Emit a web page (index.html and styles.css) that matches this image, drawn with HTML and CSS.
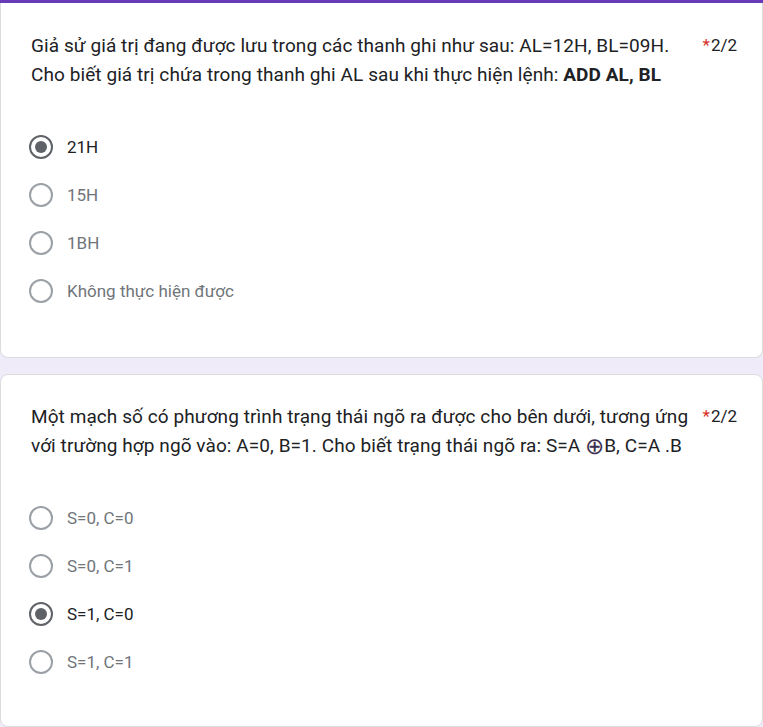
FILE: index.html
```html
<!DOCTYPE html>
<html lang="vi">
<head>
<meta charset="utf-8">
<link rel="stylesheet" href="styles.css">
</head>
<body>
<div class="topbar"></div>
<div class="card card-first">
  <div class="qhead">
    <div class="qtitle">Giả sử giá trị đang được lưu trong các thanh ghi như sau: AL=12H, BL=09H.<br>Cho biết giá trị chứa trong thanh ghi AL sau khi thực hiện lệnh: <b>ADD AL, BL</b></div>
    <div class="points"><span class="req">*</span>2/2</div>
  </div>
  <div class="options">
    <div class="opt sel"><span class="radio"></span><span class="label">21H</span></div>
    <div class="opt"><span class="radio"></span><span class="label">15H</span></div>
    <div class="opt"><span class="radio"></span><span class="label">1BH</span></div>
    <div class="opt"><span class="radio"></span><span class="label">Không thực hiện được</span></div>
  </div>
</div>
<div class="card">
  <div class="qhead">
    <div class="qtitle">Một mạch số có phương trình trạng thái ngõ ra được cho bên dưới, tương ứng<br>với trường hợp ngõ vào: A=0, B=1. Cho biết trạng thái ngõ ra: S=A <span class="xor">⊕</span>B, C=A .B</div>
    <div class="points"><span class="req">*</span>2/2</div>
  </div>
  <div class="options">
    <div class="opt"><span class="radio"></span><span class="label">S=0, C=0</span></div>
    <div class="opt"><span class="radio"></span><span class="label">S=0, C=1</span></div>
    <div class="opt sel"><span class="radio"></span><span class="label">S=1, C=0</span></div>
    <div class="opt"><span class="radio"></span><span class="label">S=1, C=1</span></div>
  </div>
</div>
</body>
</html>
```
FILE: styles.css
```css
html, body {
  margin: 0;
  padding: 0;
}
body {
  background: #f0ebf8;
  font-family: Roboto, "Noto Sans", sans-serif;
  color: #202124;
  width: 763px;
  overflow: hidden;
}
.topbar {
  height: 3px;
  background: #673ab7;
}
.card {
  background: #fff;
  border: 1px solid #dadce0;
  border-radius: 8px;
  padding: 27px 0 40px 0;
  margin-top: 16px;
}
.card-first {
  margin-top: 0;
  border-top: none;
  border-radius: 0 0 8px 8px;
  padding-top: 28px;
  padding-bottom: 42px;
}
.qhead {
  display: flex;
  padding: 0 25px 0 30px;
}
.qtitle {
  flex: 1;
  font-size: 19px;
  line-height: 29px;
  letter-spacing: 0.08px;
}
.qtitle b {
  font-weight: 700;
}
.xor {
  font-family: "DejaVu Sans", sans-serif;
  font-size: 23px;
  font-weight: 300;
  line-height: 1;
  color: #3c3050;
  vertical-align: -2px;
}
.points {
  font-size: 17px;
  line-height: 29px;
  white-space: nowrap;
  margin-left: 8px;
}
.req {
  color: #d93025;
  margin-right: 1px;
}
.options {
  margin-top: 34px;
  display: flex;
  flex-direction: column;
}
.opt {
  height: 48px;
  display: flex;
  align-items: center;
  padding-left: 28px;
}
.radio {
  box-sizing: border-box;
  width: 24px;
  height: 24px;
  border: 2px solid #9aa0a6;
  border-radius: 50%;
  display: flex;
  align-items: center;
  justify-content: center;
  flex: none;
}
.sel .radio {
  border-color: #5f6368;
}
.sel .radio::after {
  content: "";
  width: 12px;
  height: 12px;
  border-radius: 50%;
  background: #5f6368;
}
.label {
  margin-left: 14px;
  font-size: 17px;
  color: #70757a;
}
.sel .label {
  color: #202124;
}
```
